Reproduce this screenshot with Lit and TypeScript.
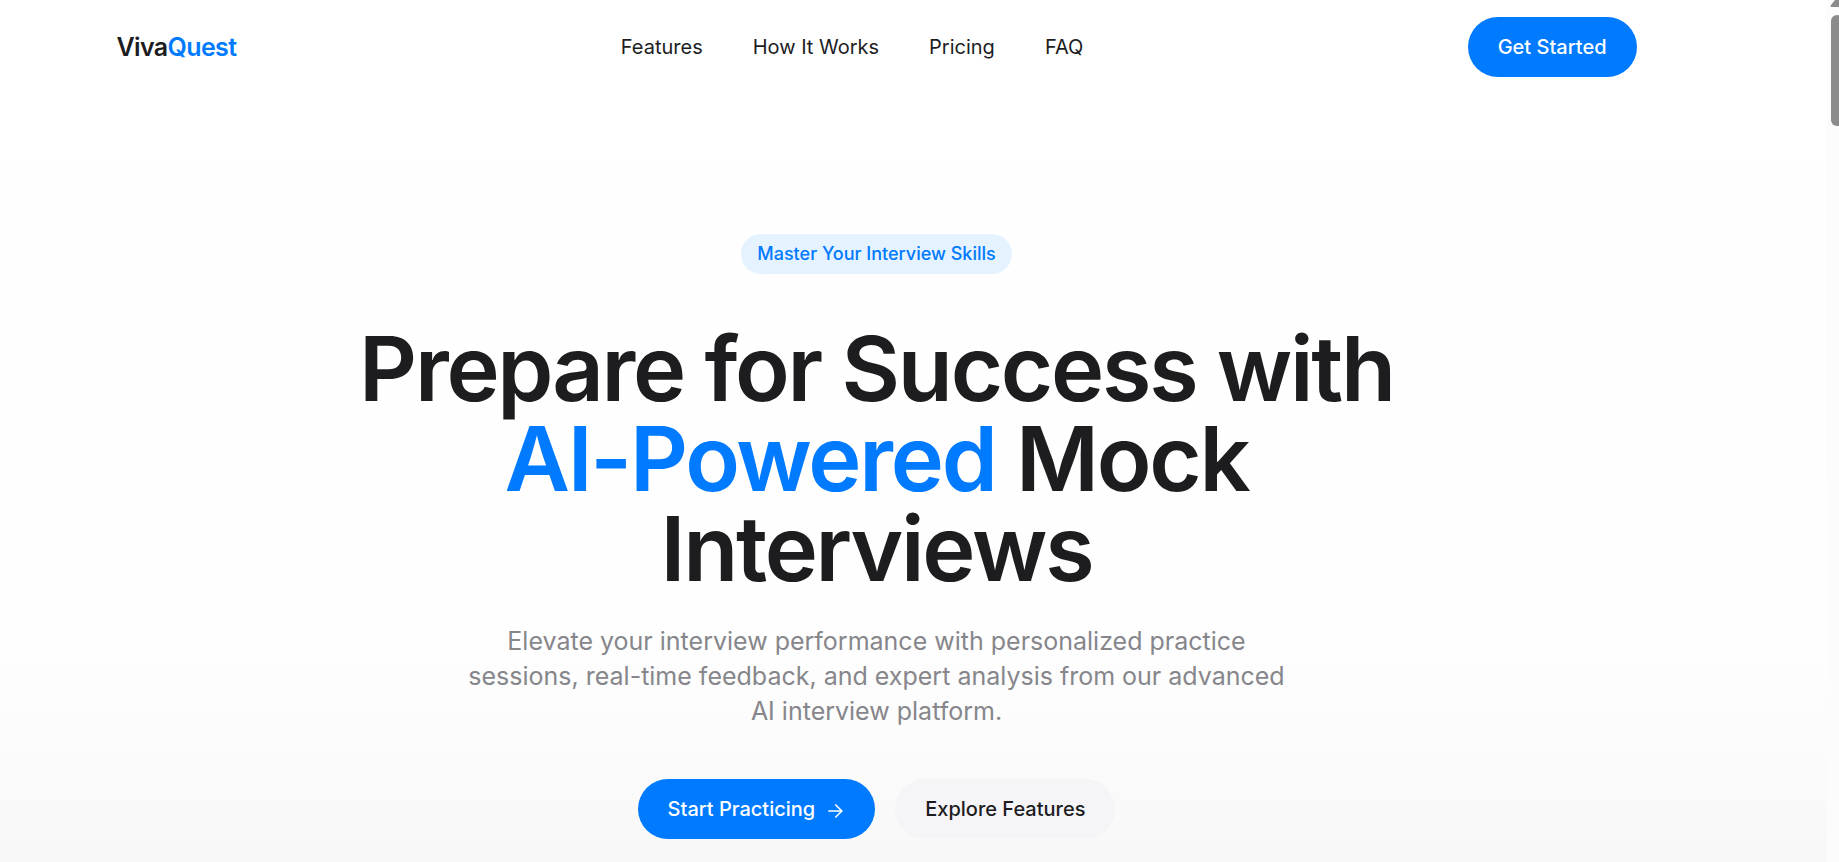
import { LitElement, html, css } from "lit";
import { customElement } from "lit/decorators.js";

@customElement("app-root")
export class AppRoot extends LitElement {
  static styles = css`
    :host {
      display: block;
      font-family: Inter, "Liberation Sans", sans-serif;
      font-size: 20px;
      line-height: 30px;
      color: #1d1d1f;
    }
    * { box-sizing: border-box; }
    .page {
      position: relative;
      min-height: 100vh;
      padding-right: 86px;
      background: linear-gradient(to bottom, #ffffff 0%, #fefefe 75%, #f8f8f8 100%);
    }
    .container {
      max-width: 1520px;
      margin: 0 auto;
    }
    .bar {
      display: flex;
      align-items: center;
      justify-content: space-between;
      padding: 17px 0;
    }
    .logo {
      font-size: 25px;
      font-weight: 600;
      letter-spacing: -0.025em;
      color: inherit;
      text-decoration: none;
    }
    .accent { color: #007aff; }
    .nav { display: flex; gap: 50px; }
    .nav a { color: inherit; text-decoration: none; }
    .button {
      display: inline-flex;
      align-items: center;
      gap: 10px;
      height: 60px;
      padding: 0 30px;
      border: 0;
      border-radius: 30px;
      font: inherit;
      font-weight: 500;
      color: #1d1d1f;
      background: #f5f5f7;
      cursor: pointer;
    }
    .primary { color: #ffffff; background: #007aff; }
    .hero {
      display: flex;
      flex-direction: column;
      align-items: center;
      padding: 140px 20px 23px;
      text-align: center;
    }
    .badge {
      padding: 5px 16px;
      border-radius: 20px;
      font-size: 18px;
      font-weight: 500;
      color: #007aff;
      background: #e5f2ff;
    }
    .title {
      max-width: 1120px;
      margin: 50px 0 30px;
      font-size: 90px;
      line-height: 90px;
      font-weight: 600;
      letter-spacing: -0.025em;
    }
    .lead {
      max-width: 840px;
      margin: 0 0 50px;
      font-size: 25px;
      line-height: 35px;
      color: #86868b;
    }
    .actions { display: flex; gap: 20px; }
    .arrow { width: 20px; height: 20px; }
    .scroll {
      position: absolute;
      inset: 0 0 0 auto;
      width: 12px;
      overflow: hidden;
      background: #fcfcfc;
    }
    .up { display: block; width: 12px; height: 8px; }
    .thumb {
      width: 12px;
      height: 111px;
      margin: 7px 0 0 4px;
      border-radius: 6px;
      background: #8b8b8b;
    }
  `;

  render() {
    return html`
      <div class="page">
        <header class="container bar">
          <a class="logo" href="#">Viva<span class="accent">Quest</span></a>
          <nav class="nav">
            <a href="#features">Features</a>
            <a href="#how">How It Works</a>
            <a href="#pricing">Pricing</a>
            <a href="#faq">FAQ</a>
          </nav>
          <button class="button primary">Get Started</button>
        </header>
        <main class="container hero">
          <div class="badge">Master Your Interview Skills</div>
          <h1 class="title">
            Prepare for Success with <span class="accent">AI-Powered</span> Mock Interviews
          </h1>
          <p class="lead">
            Elevate your interview performance with personalized practice sessions, real-time
            feedback, and expert analysis from our advanced AI interview platform.
          </p>
          <div class="actions">
            <button class="button primary">
              Start Practicing
              <svg class="arrow" viewBox="0 0 20 20" fill="none" stroke="currentColor" stroke-width="1.6" aria-hidden="true">
                <path d="M3.3 12H16.5M10.3 5.5L16.8 12L10.3 18.5" />
              </svg>
            </button>
            <button class="button">Explore Features</button>
          </div>
        </main>
        <div class="scroll" aria-hidden="true">
          <svg class="up" viewBox="0 0 12 8"><path d="M8 0H12V7H4Q3 6 4 5Z" fill="#8b8b8b" /></svg>
          <div class="thumb"></div>
        </div>
      </div>
    `;
  }
}
